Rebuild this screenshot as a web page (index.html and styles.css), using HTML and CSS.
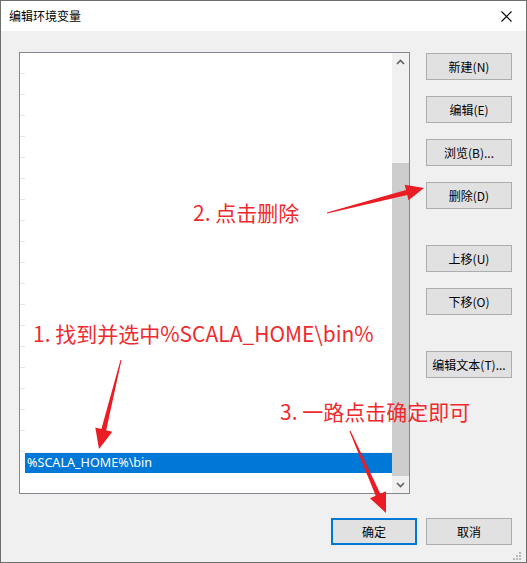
FILE: index.html
```html
<!DOCTYPE html>
<html lang="zh-CN">
<head>
<meta charset="utf-8">
<title>编辑环境变量</title>
<link rel="stylesheet" href="styles.css">
</head>
<body>
<div class="window">
  <div class="titlebar">
    <span class="title">编辑环境变量</span>
    <svg class="close" width="11" height="11" viewBox="0 0 11 11"><path d="M0.5 0.5 L10.5 10.5 M10.5 0.5 L0.5 10.5" stroke="#000" stroke-width="1.1" fill="none"/></svg>
  </div>
  <div class="content">
    <div class="main">
      <div class="listbox">
        <div class="list">
          <div class="row"></div><div class="row"></div><div class="row"></div><div class="row"></div>
          <div class="row"></div><div class="row"></div><div class="row"></div><div class="row"></div>
          <div class="row"></div><div class="row"></div><div class="row"></div><div class="row"></div>
          <div class="row"></div><div class="row"></div><div class="row"></div><div class="row"></div>
          <div class="row"></div><div class="row"></div><div class="row"></div>
          <div class="row selected"><span class="sel-text">%SCALA_HOME%\bin</span></div>
        </div>
        <div class="scrollbar">
          <div class="sb-btn"><svg width="9" height="6" viewBox="0 0 9 6"><path d="M1 5 L4.5 1.5 L8 5" stroke="#606060" stroke-width="1.6" fill="none"/></svg></div>
          <div class="sb-track"><div class="sb-thumb"></div></div>
          <div class="sb-btn"><svg width="9" height="6" viewBox="0 0 9 6"><path d="M1 1 L4.5 4.5 L8 1" stroke="#606060" stroke-width="1.6" fill="none"/></svg></div>
        </div>
      </div>
      <div class="side">
        <div class="group">
          <button class="btn">新建(N)</button>
          <button class="btn">编辑(E)</button>
          <button class="btn">浏览(B)...</button>
          <button class="btn">删除(D)</button>
        </div>
        <div class="group">
          <button class="btn">上移(U)</button>
          <button class="btn">下移(O)</button>
        </div>
        <div class="group">
          <button class="btn">编辑文本(T)...</button>
        </div>
      </div>
    </div>
    <div class="footer">
      <button class="btn primary">确定</button>
      <button class="btn">取消</button>
    </div>
  </div>

  <div class="note note1">1. 找到并选中%SCALA_HOME\bin%</div>
  <div class="note note2">2. 点击删除</div>
  <div class="note note3">3. 一路点击确定即可</div>

  <svg class="overlay" width="527" height="563" viewBox="0 0 527 563">
    <polygon fill="#ea1c24" points="120.5,359.9 101.4,429.0 95.3,427.5 99,449 112.3,431.7 106.2,430.2 121.5,360.1"/>
    <polygon fill="#ea1c24" points="326.9,212.5 406.0,190.1 404.7,184.8 424,188 408.5,200.2 407.2,194.9 327.1,213.5"/>
    <polygon fill="#ea1c24" points="349.5,431.2 375.7,495.7 370.0,498.2 386,513 386.0,491.2 380.3,493.7 350.5,430.8"/>
    <g fill="#b8b8b8">
      <rect x="519" y="552" width="2" height="2"/>
      <rect x="516" y="555" width="2" height="2"/>
      <rect x="519" y="555" width="2" height="2"/>
      <rect x="513" y="558" width="2" height="2"/>
      <rect x="516" y="558" width="2" height="2"/>
      <rect x="519" y="558" width="2" height="2"/>
    </g>
  </svg>
</div>
</body>
</html>
```

FILE: styles.css
```css
* { box-sizing: border-box; }
html, body { margin: 0; padding: 0; background: #f0f0f0; }
body {
  font-family: "Noto Sans CJK SC", "Noto Sans", sans-serif;
  font-size: 12px;
  color: #000;
}
.window {
  position: relative;
  width: 527px;
  height: 563px;
  border: 1px solid #6e6e6e;
  background: #f0f0f0;
  display: flex;
  flex-direction: column;
  overflow: hidden;
}
.titlebar {
  height: 30px;
  background: #fff;
  display: flex;
  align-items: center;
  justify-content: space-between;
  padding: 0 14px 0 8px;
  flex: none;
}
.title { font-size: 12px; line-height: 14px; }
.close { display: block; }
.content {
  flex: 1;
  padding: 21px 14px 0 18px;
  display: flex;
  flex-direction: column;
}
.main {
  display: flex;
  gap: 16px;
}
.listbox {
  width: 391px;
  height: 442px;
  border: 1px solid #828790;
  background: #fff;
  display: flex;
}
.list {
  flex: 1;
  display: flex;
  flex-direction: column;
}
.row {
  height: 21px;
  flex: none;
  background: linear-gradient(#e4e4e4, #e4e4e4) left bottom / 5px 1px no-repeat;
}
.row.selected {
  margin-left: 5px;
  background: #0078d7;
  color: #fff;
  display: flex;
  align-items: center;
  padding-left: 2px;
  border-top: 1px solid #f4f4f4;
}
.sel-text {
  font-family: "Noto Sans", "DejaVu Sans", sans-serif;
  font-size: 12.6px;
  line-height: 14px;
}
.scrollbar {
  width: 17px;
  display: flex;
  flex-direction: column;
  background: #f0f0f0;
}
.sb-btn {
  height: 17px;
  flex: none;
  display: flex;
  align-items: center;
  justify-content: center;
}
.sb-btn svg { display: block; }
.sb-track {
  flex: 1;
  padding-top: 93px;
}
.sb-thumb {
  height: 313px;
  background: #cdcdcd;
}
.side {
  width: 86px;
  padding-top: 1px;
  display: flex;
  flex-direction: column;
  gap: 36px;
}
.group {
  display: flex;
  flex-direction: column;
  gap: 16px;
}
.btn {
  width: 86px;
  height: 27px;
  margin: 0;
  padding: 0;
  background: #e1e1e1;
  border: 1px solid #adadad;
  font-family: "Noto Sans CJK SC", "Noto Sans", sans-serif;
  font-size: 12px;
  color: #000;
  line-height: 14px;
  text-align: center;
}
.btn.primary {
  border: 2px solid #0078d7;
}
.footer {
  margin-top: 24px;
  display: flex;
  justify-content: flex-end;
  gap: 9px;
}
.note {
  position: absolute;
  font-family: "Noto Sans CJK SC", "Noto Sans", sans-serif;
  font-size: 21px;
  line-height: 21px;
  color: #ee2b2f;
  white-space: nowrap;
}
.note1 { left: 32px; top: 322px; }
.note2 { left: 192px; top: 201px; }
.note3 { left: 279px; top: 400px; }
.overlay {
  position: absolute;
  left: -1px;
  top: -1px;
  pointer-events: none;
}
```
